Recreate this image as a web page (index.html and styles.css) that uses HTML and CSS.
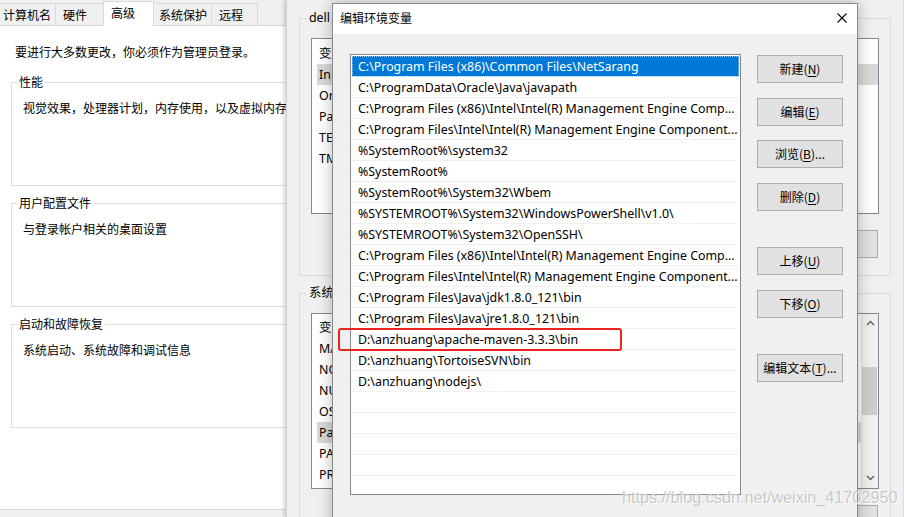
FILE: index.html
```html
<!DOCTYPE html>
<html lang="zh-CN">
<head>
<meta charset="utf-8">
<title>编辑环境变量</title>
<link rel="stylesheet" href="styles.css">
</head>
<body>
<div class="desktop">

  <!-- System properties window (back) -->
  <div class="win sysprops">
    <div class="tabs">
      <div class="tab tab-first">计算机名</div>
      <div class="tab tab-hw">硬件</div>
      <div class="tab tab-active">高级</div>
      <div class="tab tab-prot">系统保护</div>
      <div class="tab tab-remote">远程</div>
    </div>
    <div class="tab-page">
      <p class="admin-note">要进行大多数更改，你必须作为管理员登录。</p>
      <div class="group">
        <span class="group-title">性能</span>
        <p class="group-text">视觉效果，处理器计划，内存使用，以及虚拟内存</p>
      </div>
      <div class="group">
        <span class="group-title">用户配置文件</span>
        <p class="group-text">与登录帐户相关的桌面设置</p>
      </div>
      <div class="group">
        <span class="group-title">启动和故障恢复</span>
        <p class="group-text">系统启动、系统故障和调试信息</p>
      </div>
    </div>
  </div>

  <!-- Environment variables window (middle) -->
  <div class="win envvars">
    <div class="ev-group ev-user">
      <span class="ev-title">dell</span>
      <div class="ev-list">
        <div class="ev-row ev-head"><span class="ev-name">变量</span></div>
        <div class="ev-row ev-sel"><span class="ev-name">In</span></div>
        <div class="ev-row"><span class="ev-name">Or</span></div>
        <div class="ev-row"><span class="ev-name">Pa</span></div>
        <div class="ev-row"><span class="ev-name">TE</span></div>
        <div class="ev-row"><span class="ev-name">TM</span></div>
      </div>
      <div class="ev-buttons">
        <div class="ev-btn"></div>
      </div>
    </div>
    <div class="ev-group ev-sys">
      <span class="ev-title">系统</span>
      <div class="ev-list ev-list-sys">
        <div class="ev-rows">
          <div class="ev-row ev-head"><span class="ev-name">变</span></div>
          <div class="ev-row"><span class="ev-name">MA</span></div>
          <div class="ev-row"><span class="ev-name">NO</span></div>
          <div class="ev-row"><span class="ev-name">NU</span></div>
          <div class="ev-row"><span class="ev-name">OS</span></div>
          <div class="ev-row ev-sel"><span class="ev-name">Pa</span></div>
          <div class="ev-row"><span class="ev-name">PA</span></div>
          <div class="ev-row"><span class="ev-name">PR</span></div>
        </div>
        <div class="scrollbar">
          <svg class="sb-arrow" width="15" height="12" viewBox="0 0 15 12"><path d="M4 8 L7.5 4.5 L11 8" fill="none" stroke="#606060" stroke-width="1.4"/></svg>
          <div class="sb-track"><div class="sb-thumb"></div></div>
          <svg class="sb-arrow" width="15" height="12" viewBox="0 0 15 12"><path d="M4 4 L7.5 7.5 L11 4" fill="none" stroke="#606060" stroke-width="1.4"/></svg>
        </div>
      </div>
      <div class="ev-buttons">
        <div class="ev-btn"></div>
      </div>
    </div>
  </div>

  <!-- Edit environment variable dialog (front) -->
  <div class="dialog">
    <div class="titlebar">
      <span class="title">编辑环境变量</span>
      <svg class="close" width="10" height="10" viewBox="0 0 10 10"><path d="M0.5 0.5 L9.5 9.5 M9.5 0.5 L0.5 9.5" stroke="#000" stroke-width="1.1" fill="none"/></svg>
    </div>
    <div class="dlg-body">
      <div class="path-list">
        <div class="row row-sel">C:\Program Files (x86)\Common Files\NetSarang</div>
        <div class="row">C:\ProgramData\Oracle\Java\javapath</div>
        <div class="row">C:\Program Files (x86)\Intel\Intel(R) Management Engine Comp...</div>
        <div class="row">C:\Program Files\Intel\Intel(R) Management Engine Component...</div>
        <div class="row">%SystemRoot%\system32</div>
        <div class="row">%SystemRoot%</div>
        <div class="row">%SystemRoot%\System32\Wbem</div>
        <div class="row">%SYSTEMROOT%\System32\WindowsPowerShell\v1.0\</div>
        <div class="row">%SYSTEMROOT%\System32\OpenSSH\</div>
        <div class="row">C:\Program Files (x86)\Intel\Intel(R) Management Engine Comp...</div>
        <div class="row">C:\Program Files\Intel\Intel(R) Management Engine Component...</div>
        <div class="row">C:\Program Files\Java\jdk1.8.0_121\bin</div>
        <div class="row">C:\Program Files\Java\jre1.8.0_121\bin</div>
        <div class="row">D:\anzhuang\apache-maven-3.3.3\bin</div>
        <div class="row">D:\anzhuang\TortoiseSVN\bin</div>
        <div class="row">D:\anzhuang\nodejs\</div>
        <div class="row"></div>
        <div class="row"></div>
        <div class="row"></div>
        <div class="row"></div>
        <div class="row"></div>
      </div>
      <div class="btn-col">
        <div class="btn">新建(<u>N</u>)</div>
        <div class="btn">编辑(<u>E</u>)</div>
        <div class="btn">浏览(<u>B</u>)...</div>
        <div class="btn">删除(<u>D</u>)</div>
        <div class="btn btn-gap">上移(<u>U</u>)</div>
        <div class="btn">下移(<u>O</u>)</div>
        <div class="btn btn-gap">编辑文本(<u>T</u>)...</div>
      </div>
    </div>
  </div>

  <div class="highlight"></div>
  <div class="watermark">https://blog.csdn.net/weixin_41702950</div>
</div>
</body>
</html>
```

FILE: styles.css
```css
* { box-sizing: border-box; }

html, body {
  margin: 0;
  padding: 0;
}

body {
  width: 904px;
  height: 517px;
  overflow: hidden;
  background: #f0f0f0;
  font-family: "Noto Sans", "Noto Sans CJK SC", sans-serif;
  font-size: 12px;
  color: #000;
}

p { margin: 0; }

.desktop {
  position: relative;
  width: 904px;
  height: 517px;
  overflow: hidden;
}

.win { position: absolute; }

/* ---------- System properties ---------- */
.sysprops {
  left: 0;
  top: 0;
  width: 300px;
  height: 517px;
  background: #f0f0f0;
  display: flex;
  flex-direction: column;
}

.tabs {
  display: flex;
  align-items: flex-end;
  height: 25px;
  padding-top: 1px;
  margin-left: -6px;
  position: relative;
  z-index: 1;
}

.tab {
  height: 22px;
  border: 1px solid #d9d9d9;
  border-bottom: none;
  margin-right: -1px;
  background: #f0f0f0;
  padding: 3px 0 0 7px;
  line-height: 16px;
  font-family: "Noto Sans CJK SC", sans-serif;
}

.tab-first { width: 62px; padding-left: 8px; }
.tab-hw { width: 49px; }
.tab-active {
  width: 51px;
  height: 25px;
  background: #fff;
  padding-top: 3px;
  margin-bottom: -1px;
}
.tab-prot { width: 59px; padding-left: 5px; }
.tab-remote { width: 47px; }

.tab-page {
  background: #fff;
  border-top: 1px solid #d9d9d9;
  border-bottom: 1px solid #d9d9d9;
  height: 485px;
  padding: 18px 0 0 11px;
  font-family: "Noto Sans CJK SC", sans-serif;
}

.admin-note {
  margin-left: 4px;
  line-height: 16px;
  height: 38px;
}

.group {
  border: 1px solid #dcdcdc;
  border-right: none;
  height: 104px;
  margin-bottom: 17px;
  padding-left: 6px;
}

.group-title {
  display: inline-block;
  background: #fff;
  padding: 0 2px 0 1px;
  line-height: 16px;
  margin-top: -9px;
  vertical-align: top;
}

.group-text {
  margin: 0 0 0 5px;
  line-height: 16px;
  padding-top: 0;
}

/* ---------- Environment variables window ---------- */
.envvars {
  left: 286px;
  top: 0;
  width: 618px;
  height: 517px;
  background: #f0f0f0;
  border-left: 1px solid #cfcfcf;
  border-right: 1px solid #dcdcdc;
  box-shadow: -2px 0 4px rgba(0, 0, 0, 0.18);
  padding: 18px 12px 0;
}

.ev-group {
  border: 1px solid #dcdcdc;
  padding: 19px 11px 0;
  position: relative;
}

.ev-user { height: 258px; }
.ev-sys { height: 260px; margin-top: 17px; }

.ev-title {
  position: absolute;
  left: 7px;
  top: -9px;
  background: #f0f0f0;
  padding: 0 2px;
  line-height: 16px;
  font-size: 12.4px;
}

.ev-list {
  background: #fff;
  border: 1px solid #828790;
  height: 176px;
  padding: 4px 0 0 5px;
  overflow: hidden;
}

.ev-list-sys {
  display: flex;
  padding: 0;
}

.ev-rows {
  flex: 1;
  padding: 3px 0 0 5px;
}

.ev-row {
  height: 21px;
  line-height: 21px;
  display: flex;
  padding-left: 2px;
  white-space: nowrap;
  font-size: 12.4px;
}

.ev-name { width: 160px; }

.ev-sel { background: #d9d9d9; }

.scrollbar {
  width: 17px;
  display: flex;
  flex-direction: column;
  background: #f0f0f0;
  border-left: 1px solid #e6e6e6;
}

.sb-arrow { display: block; margin: 3px 1px 4px; }

.sb-track {
  flex: 1;
  padding-top: 34px;
}

.sb-thumb {
  width: 15px;
  height: 48px;
  background: #cdcdcd;
}

.ev-buttons {
  display: flex;
  justify-content: flex-end;
  padding: 16px 1px 0 0;
}

.ev-btn {
  width: 86px;
  height: 28px;
  background: #e1e1e1;
  border: 1px solid #adadad;
}

/* ---------- Edit dialog ---------- */
.dialog {
  position: absolute;
  left: 332px;
  top: 3px;
  width: 526px;
  height: 530px;
  border: 1px solid #8a8a8a;
  background: #f0f0f0;
  box-shadow: 0 0 14px rgba(0, 0, 0, 0.28);
  display: flex;
  flex-direction: column;
}

.titlebar {
  height: 30px;
  background: #fff;
  display: flex;
  align-items: center;
  justify-content: space-between;
  padding: 0 10px 2px 7px;
}

.title {
  font-family: "Noto Sans CJK SC", sans-serif;
  font-size: 12px;
  line-height: 16px;
}

.close { display: block; }

.dlg-body {
  display: flex;
  align-items: flex-start;
  padding: 20px 0 0 17px;
}

.path-list {
  width: 391px;
  height: 441px;
  background: #fff;
  border: 1px solid #828790;
  padding: 1px;
  overflow: hidden;
}

.row {
  height: 21px;
  border-bottom: 1px solid #f0f0f0;
  padding: 1px 0 0 6px;
  line-height: 19px;
  font-size: 12.4px;
  white-space: nowrap;
  overflow: hidden;
}

.row-sel {
  background: #0078d7;
  color: #fff;
  outline: 1px dotted #9cc9ef;
  outline-offset: -1px;
  border-bottom-color: #fff;
}

.btn-col {
  display: flex;
  flex-direction: column;
  gap: 14.67px;
  margin-left: 16px;
  padding-top: 1px;
}

.btn {
  width: 86px;
  height: 28px;
  background: #e1e1e1;
  border: 1px solid #adadad;
  text-align: center;
  line-height: 25px;
  font-family: "Noto Sans CJK SC", sans-serif;
}

.btn u { text-underline-offset: 2px; }

.btn-gap { margin-top: 21.33px; }

/* ---------- overlays ---------- */
.highlight {
  position: absolute;
  left: 338px;
  top: 328px;
  width: 284px;
  height: 23px;
  border: 2px solid #e8251e;
  border-radius: 3px;
}

.watermark {
  position: absolute;
  left: 622px;
  top: 488px;
  font-family: "Liberation Sans", sans-serif;
  font-size: 16.2px;
  color: rgba(185, 185, 185, 0.8);
  text-shadow: 0 0 1px #fff, 1px 1px 0 rgba(255, 255, 255, 0.8);
  white-space: nowrap;
}
```
